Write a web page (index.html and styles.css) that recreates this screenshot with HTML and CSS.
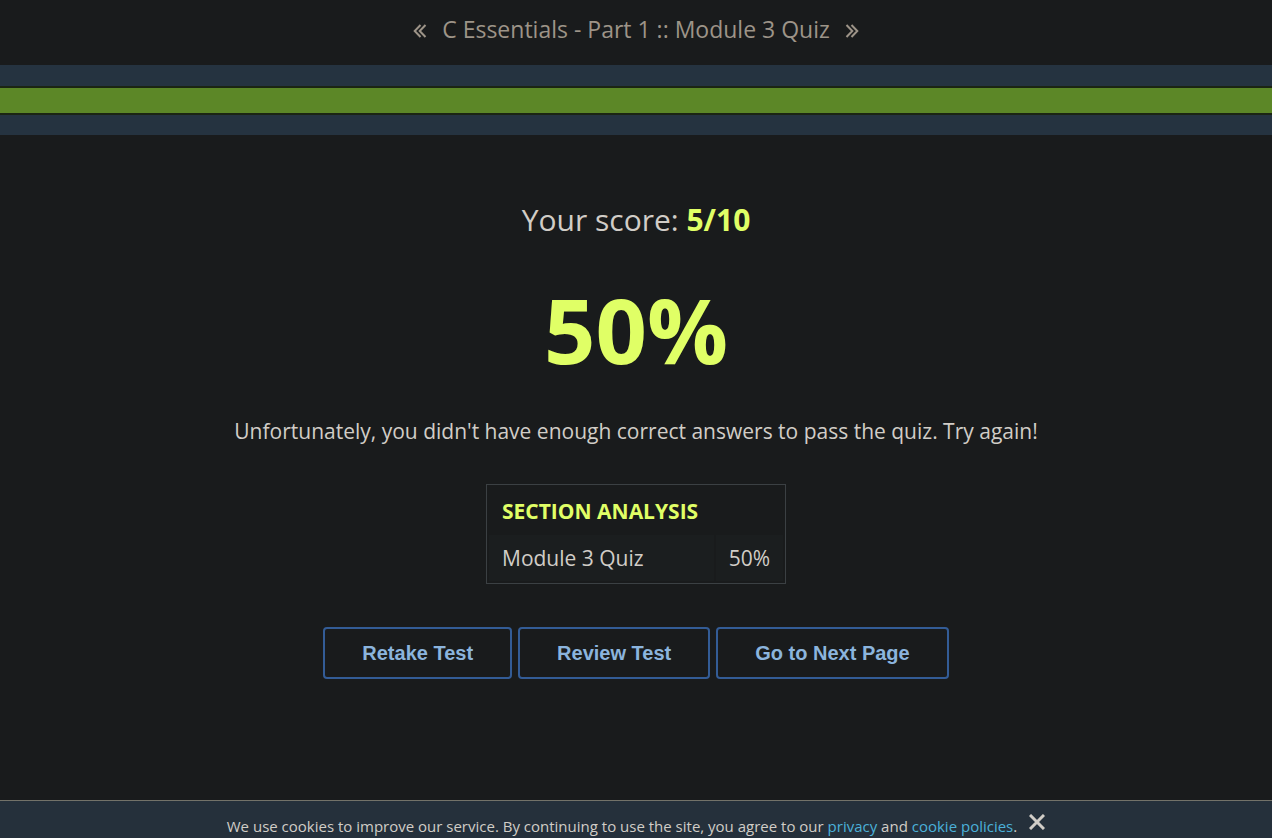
FILE: index.html
```html
<!DOCTYPE html>
<html lang="en">
<head>
<meta charset="utf-8">
<title>Module 3 Quiz</title>
<link rel="stylesheet" href="styles.css">
</head>
<body>
<header class="course-nav">
  <a class="arrow" href="#previous" aria-label="Previous page"><svg viewBox="0 0 14 14"><path d="M7.5 1 1.7 7l5.800 6M12.500 1 6.700 7l5.800 6"/></svg></a>
  <h1 class="course-title">C Essentials - Part 1 :: Module 3 Quiz</h1>
  <a class="arrow" href="#next" aria-label="Next page"><svg viewBox="0 0 14 14"><path d="M1.500 1 7.300 7l-5.800 6M6.500 1l5.800 6-5.800 6"/></svg></a>
</header>
<div class="progress"><div class="progress-bar"></div></div>
<main class="result">
  <p class="score">Your score: <strong>5/10</strong></p>
  <p class="percent">50%</p>
  <p class="message">Unfortunately, you didn't have enough correct answers to pass the quiz. Try again!</p>
  <table class="analysis">
    <thead><tr><th colspan="2">SECTION ANALYSIS</th></tr></thead>
    <tbody><tr><td class="section">Module 3 Quiz</td><td>50%</td></tr></tbody>
  </table>
  <div class="actions">
    <button type="button">Retake Test</button>
    <button type="button">Review Test</button>
    <button type="button">Go to Next Page</button>
  </div>
</main>
<footer class="cookies">
  <p>We use cookies to improve our service. By continuing to use the site, you agree to our <a href="#privacy">privacy</a> and <a href="#cookies">cookie policies</a>.</p>
  <button class="close" type="button" aria-label="Close"><svg viewBox="0 0 16 16"><path d="M1 1l14 14M15 1 1 15"/></svg></button>
</footer>
</body>
</html>
```

FILE: styles.css
```css
* { box-sizing: border-box; }
body {
  margin: 0;
  height: 100vh;
  overflow: hidden;
  display: flex;
  flex-direction: column;
  background: #191b1c;
  color: #d1cdc7;
  font-family: "Open Sans", "Noto Sans", sans-serif;
}
p, h1 { margin: 0; }
.course-nav {
  flex: none;
  padding: 13px 0 20px;
  display: flex;
  justify-content: center;
  align-items: center;
  gap: 15px;
  color: #9d9488;
}
.course-title { font-size: 23px; line-height: 32px; font-weight: 400; }
.arrow { color: inherit; padding-top: 3px; }
.arrow svg { display: block; width: 14px; height: 14px; fill: none; stroke: currentColor; stroke-width: 2; }
.progress { flex: none; padding: 21px 0 20px; background: #253340; }
.progress-bar {
  height: 29px;
  background: #5c8727;
  border: solid #1b2513;
  border-width: 2px 0;
}
.result {
  flex: 1;
  display: flex;
  flex-direction: column;
  align-items: center;
  padding-top: 64px;
}
.score { font-size: 30px; line-height: 42px; }
.score strong, .percent, .analysis th { color: #e0ff66; font-weight: 700; }
.percent { margin-top: 27px; font-size: 90px; line-height: 122px; }
.message { margin-top: 26px; font-size: 21px; line-height: 30px; }
.analysis {
  margin-top: 38px;
  width: 300px;
  border: 1px solid #3b4043;
  border-spacing: 2px;
  font-size: 21px;
  line-height: 30px;
}
.analysis th { padding: 9px 13px 7px; text-align: left; }
.analysis td { padding: 8px 13px; background: #1b1e1f; }
.analysis .section { width: 100%; }
.actions { display: flex; gap: 6px; margin-top: 43px; }
.actions button {
  height: 52px;
  padding: 0 37px;
  background: transparent;
  border: 2px solid #335c96;
  border-radius: 4px;
  color: #8bb4dd;
  font: 700 20px "Liberation Sans", Arial, sans-serif;
}
.cookies {
  flex: none;
  height: 38px;
  display: flex;
  justify-content: center;
  gap: 12px;
  background: #25303b;
  border-top: 1px solid #737269;
  padding-top: 13px;
  font-size: 15px;
  line-height: 24px;
}
.cookies a { color: #4bb0d9; text-decoration: none; }
.close { width: 16px; height: 16px; padding: 0; border: 0; background: none; color: #d1cdc7; }
.close svg { display: block; width: 16px; height: 16px; stroke: currentColor; stroke-width: 3; }
```
